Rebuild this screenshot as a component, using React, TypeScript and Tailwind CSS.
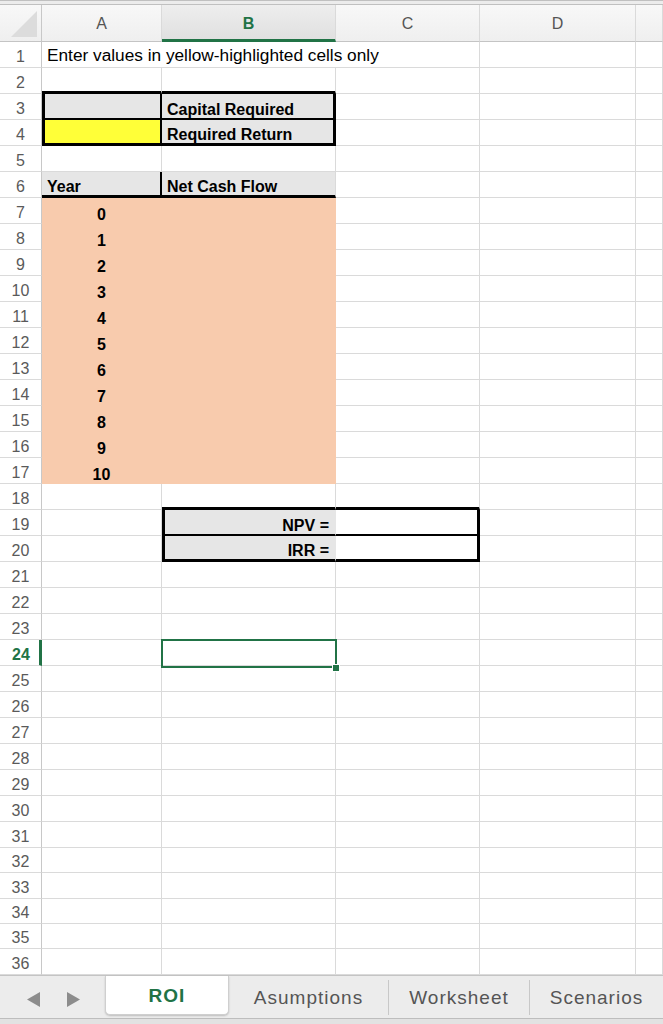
import React from "react";

const cols = "grid grid-cols-[42px_120px_174px_144px_156px_1fr]";
const short = new Set([32, 34, 35]);

type CellProps = {
  r?: string;
  b?: string;
  l?: string;
  className?: string;
  children?: React.ReactNode;
};

function Cell({
  r = "border-r border-r-[#dadada]",
  b = "border-b border-b-[#dadada]",
  l = "",
  className = "",
  children,
}: CellProps) {
  return (
    <div
      className={`flex min-w-0 items-end whitespace-nowrap ${r} ${b} ${l} ${className}`}
    >
      {children}
    </div>
  );
}

const peach = "bg-[#f8cbad]";
const peachR = "border-r border-r-[#f8cbad]";
const peachB = "border-b border-b-[#f8cbad]";
const gray = "bg-[#e6e6e6]";
const bold = "font-bold text-[16px] text-black";

function RowCells({ n }: { n: number }) {
  if (n === 1)
    return (
      <>
        <Cell className="col-span-3 pl-[5px] pb-[3px] text-[17.25px] text-black">
          Enter values in yellow-highlighted cells only
        </Cell>
        <Cell />
        <Cell />
      </>
    );
  if (n === 2)
    return (
      <>
        <Cell b="border-b-[3px] border-b-black" />
        <Cell b="border-b-[3px] border-b-black" />
        <Cell />
        <Cell />
        <Cell />
      </>
    );
  if (n === 18)
    return (
      <>
        <Cell />
        <Cell b="border-b-[3px] border-b-black" />
        <Cell b="border-b-[3px] border-b-black" />
        <Cell />
        <Cell />
      </>
    );
  if (n === 3 || n === 4) {
    const bb = n === 3 ? "border-b-2 border-b-black" : "border-b-[3px] border-b-black";
    return (
      <>
        <Cell
          l="border-l-[3px] border-l-black"
          r="border-r-2 border-r-black"
          b={bb}
          className={n === 3 ? gray : "bg-[#ffff38]"}
        />
        <Cell r="border-r-[3px] border-r-black" b={bb} className={`${gray} pl-[5px] ${bold}`}>
          {n === 3 ? "Capital Required" : "Required Return"}
        </Cell>
        <Cell />
        <Cell />
        <Cell />
      </>
    );
  }
  if (n === 6)
    return (
      <>
        <Cell
          r="border-r-2 border-r-black"
          b="border-b-[3px] border-b-black"
          className={`${gray} pl-[5px] ${bold}`}
        >
          Year
        </Cell>
        <Cell b="border-b-[3px] border-b-black" className={`${gray} pl-[5px] ${bold}`}>
          Net Cash Flow
        </Cell>
        <Cell />
        <Cell />
        <Cell />
      </>
    );
  if (n >= 7 && n <= 17)
    return (
      <>
        <Cell r={peachR} b={peachB} className={`${peach} justify-center ${bold}`}>
          {n - 7}
        </Cell>
        <Cell r={peachR} b={peachB} className={peach} />
        <Cell />
        <Cell />
        <Cell />
      </>
    );
  if (n === 19 || n === 20) {
    const bb = n === 19 ? "border-b-2 border-b-black" : "border-b-[3px] border-b-black";
    return (
      <>
        <Cell />
        <Cell
          l="border-l-[3px] border-l-black"
          r="border-r border-r-[#e6e6e6]"
          b={bb}
          className={`${gray} justify-end pr-[6px] ${bold}`}
        >
          {n === 19 ? "NPV =" : "IRR ="}
        </Cell>
        <Cell r="border-r-[3px] border-r-black" b={bb} />
        <Cell />
        <Cell />
      </>
    );
  }
  if (n === 24)
    return (
      <>
        <Cell />
        <Cell className="relative">
          <div className="absolute -top-[1px] -left-[1px] -right-[2px] -bottom-[3px] border-2 border-[#217346]" />
          <div className="absolute -right-[5px] -bottom-[7px] h-[8px] w-[8px] border border-white bg-[#217346]" />
        </Cell>
        <Cell />
        <Cell />
        <Cell />
      </>
    );
  return (
    <>
      <Cell />
      <Cell />
      <Cell />
      <Cell />
      <Cell />
    </>
  );
}

function Row({ n }: { n: number }) {
  const sel = n === 24;
  return (
    <div className={`${cols} ${short.has(n) ? "h-[25px]" : "h-[26px]"}`}>
      <div
        className={`flex items-end justify-center border-b border-b-[#dadada] pb-[2px] text-[16px] ${
          sel
            ? "border-r-[3px] border-r-[#217346] pl-[3px] font-bold text-[#217346]"
            : "border-r border-r-[#c8c8c8] text-[#5a5a5a]"
        }`}
      >
        {n}
      </div>
      <RowCells n={n} />
    </div>
  );
}

function Header() {
  const head =
    "flex items-center justify-center border-r border-r-[#dadada] border-b border-b-[#c4c4c4] bg-gradient-to-b from-[#f8f8f8] to-[#efefef] pt-[2px] text-[16px] text-[#555]";
  return (
    <div className={`${cols} h-[37px]`}>
      <div className="flex items-end justify-end border-r border-r-[#c8c8c8] border-b border-b-[#c4c4c4] bg-gradient-to-b from-[#f8f8f8] to-[#efefef] pr-[4px] pb-[4px]">
        <svg width="26" height="26" viewBox="0 0 26 26">
          <polygon points="0,26 26,0 26,26" fill="#dcdcdc" />
        </svg>
      </div>
      <div className={head}>A</div>
      <div className="flex items-center justify-center border-r border-r-[#dadada] border-b-[3px] border-b-[#217346] bg-gradient-to-b from-[#eeeeee] to-[#e0e0e0] pt-[4px] text-[16px] font-bold text-[#217346]">
        B
      </div>
      <div className={head}>C</div>
      <div className={head}>D</div>
      <div className={head} />
    </div>
  );
}

function Tabs() {
  const tab = "flex h-full items-center justify-center pt-[1px] text-[19px] tracking-[1px] text-[#555]";
  return (
    <div className="flex h-[49px] flex-col border-t border-t-[#c4c4c4] bg-[#ececec]">
      <div className="flex h-[42px]">
        <div className="flex w-[105px] items-center gap-[27px] pl-[27px] pt-[4px]">
          <svg width="13" height="15" viewBox="0 0 13 15">
            <polygon points="13,0 0,7.5 13,15" fill="#8c8c8c" />
          </svg>
          <svg width="13" height="15" viewBox="0 0 13 15">
            <polygon points="0,0 13,7.5 0,15" fill="#8c8c8c" />
          </svg>
        </div>
        <div className="flex h-[39px] w-[124px] items-center justify-center rounded-b-[5px] border border-t-0 border-[#cfcfcf] bg-white pt-[1px] text-[19px] font-bold tracking-[1px] text-[#217346] shadow-[0_1px_2px_rgba(0,0,0,0.2)]">
          ROI
        </div>
        <div className="flex w-[160px] items-center">
          <div className={`${tab} flex-1`}>Asumptions</div>
          <div className="h-[35px] w-px bg-[#c8c8c8]" />
        </div>
        <div className="flex w-[141px] items-center">
          <div className={`${tab} flex-1`}>Worksheet</div>
          <div className="h-[35px] w-px bg-[#c8c8c8]" />
        </div>
        <div className={`${tab} flex-1`}>Scenarios</div>
      </div>
      <div className="flex-1 border-t border-t-[#bdbdbd] bg-[#e2e2e2]" />
    </div>
  );
}

export default function App() {
  const rows = Array.from({ length: 36 }, (_, i) => i + 1);
  return (
    <div className="h-[1024px] w-[663px] overflow-hidden bg-white font-['Liberation_Sans',Arial,sans-serif] leading-none">
      <div className="h-[5px] border-t border-b border-[#c0c0c0] bg-[#ececec]" />
      <Header />
      {rows.map((n) => (
        <Row key={n} n={n} />
      ))}
      <Tabs />
    </div>
  );
}
